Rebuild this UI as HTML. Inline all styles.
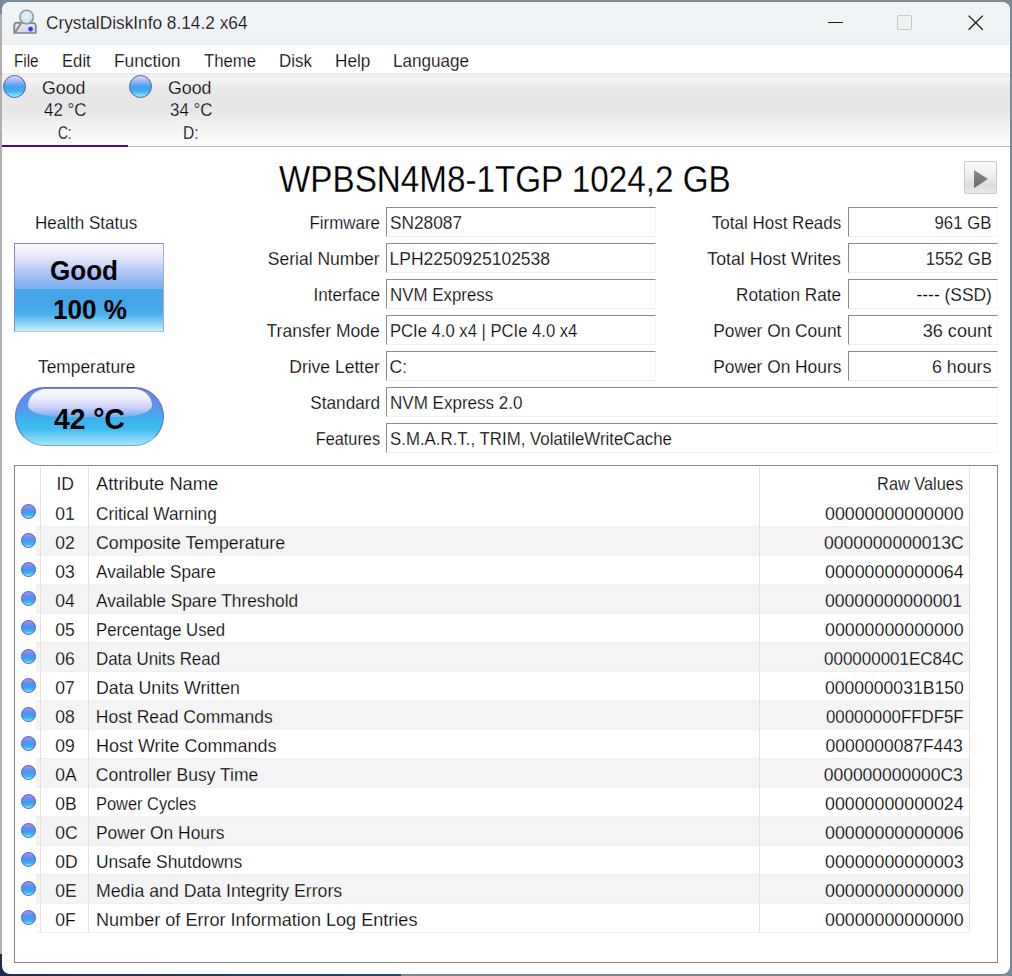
<!DOCTYPE html>
<html><head><meta charset="utf-8"><style>
html,body{margin:0;padding:0}
body{width:1012px;height:976px;overflow:hidden;position:relative;background:#7b8a97;font-family:"Liberation Sans",sans-serif}
#lstrip{position:absolute;left:0;top:14px;width:2px;height:940px;background:#aeaeae}
#bstrip{position:absolute;left:0;top:954px;width:401px;height:22px;background:linear-gradient(to right,#1e2a52,#2a3c6a 60%,#2e4470)}
#win{position:absolute;left:0;top:0;width:1012px;height:976px}
#frame{position:absolute;left:2px;top:2px;width:1008px;height:972px;border-radius:8px;background:#fff;overflow:hidden}
#titlebar{position:absolute;left:2px;top:2px;width:1008px;height:43px;background:linear-gradient(to bottom,#f1f4f5 0,#eff2f4 40px,#eceff1 43px);border-radius:8px 8px 0 0}
#menubar{position:absolute;left:2px;top:45px;width:1008px;height:28px;background:#fff}
#tabbar{position:absolute;left:2px;top:73px;width:1008px;height:73px;
 background:linear-gradient(to bottom,#ececec 0px,#ededed 1.5px,#f5f5f5 2px,#ececec 3px,#efefef 4px,#f6f6f6 5px,#eaeaea 14px,#e7e7e7 21px,#e7e7e7 37px,#efefef 49px,#f6f6f6 60px,#fbfbfb 70px,#fdfdfd 73px)}
#tabline{position:absolute;left:2px;top:146px;width:1008px;height:1px;background:#b9b9b9}
#tabsel{position:absolute;left:2px;top:145px;width:126px;height:2px;background:#3a0cb4}
.t{position:absolute;white-space:nowrap;line-height:1;color:#000;-webkit-text-stroke:0.3px rgba(255,255,255,.75)}
.b{-webkit-text-stroke:0}
.bigdot{position:absolute;top:75px;width:23px;height:23px;border-radius:50%;box-sizing:border-box;border:1px solid #48649f;
 background:linear-gradient(to bottom,#dcdcfc 0%,#9cb4f4 25%,#4aa2ee 50%,#3cb0ee 72%,#a4e6fc 100%)}

.dot{position:absolute;left:21px;width:15px;height:15px;border-radius:50%;box-sizing:border-box;border:1px solid #4a5cc0;
 background:linear-gradient(to bottom,#a890f4 0%,#6a8cf0 30%,#3a9aec 55%,#40b8f0 80%,#a0e4fa 100%)}

.box{position:absolute;height:28px;border-top:1px solid #8a8a8a;border-left:1px solid #8a8a8a;border-bottom:1px solid #f0f0f0;border-right:1px solid #f5f5f5;background:#fff}
#health{position:absolute;left:14px;top:243px;width:148px;height:87px;border:1px solid #8a88c4;border-bottom-color:#98d0ee;border-right-color:#9ab0e0;
 background:linear-gradient(to bottom,#f8f8fe 0px,#f0f0fd 8px,#d6ddfa 18px,#b0c6f6 28px,#8eb8f2 38px,#7caef0 45px,#46a4e8 45.5px,#44a6ea 62px,#4cb2ec 71px,#92d6f4 80px,#c6ecfa 87px)}

#temp{position:absolute;left:14.5px;top:387px;width:147px;height:57px;border-radius:30px;border:1px solid #6468c0;border-bottom-color:#70a8e0;overflow:hidden;
 background:linear-gradient(to bottom,#6a84ea 0%,#5a96ec 35%,#3cb2ec 55%,#40bcf0 72%,#a8e4fa 100%)}

#temp .hl{position:absolute;left:12px;top:1px;width:124px;height:28px;border-radius:22px 22px 40px 40px/20px 20px 14px 14px;
 background:linear-gradient(to bottom,#fcfcff 0%,#f0f0fe 30%,#ccd2f8 65%,rgba(150,180,242,.55) 100%)}

#icon{position:absolute;left:12px;top:8px}
#minbtn{position:absolute;left:828px;top:22px;width:15px;height:1px;background:#1e1e1e}
#maxbtn{position:absolute;left:897px;top:15px;width:13px;height:13px;border:1.3px solid #c6c8ca;border-radius:2px}
#closebtn{position:absolute;left:968px;top:15px}
#play{position:absolute;left:964px;top:161px;width:31px;height:31px;border:1px solid #c8c8c8;border-radius:2px;background:linear-gradient(to bottom,#fcfcfc 0%,#f0f0f0 40%,#dcdcdc 75%,#e8e8e8 100%)}
#play svg{position:absolute;left:8px;top:7px}
#tbl{position:absolute;left:14px;top:465px;width:982px;height:496px;border:1px solid #858585}
.shade{position:absolute;left:36px;width:933px;height:29px;background:#f4f4f4;box-shadow:inset 0 1px 0 #eeeeee}
.rline{position:absolute;left:36px;width:933px;height:1px;background:#efefef}
.vl{position:absolute;top:467px;width:1px;height:465px;background:#e3e3e3}

</style></head><body>
<div id="lstrip"></div><div id="bstrip"></div><div id="frame"></div>
<div id="win">
<div id="titlebar"></div>
<div id="menubar"></div>
<div id="tabbar"></div>
<div id="tabline"></div>
<div id="tabsel"></div>
<div class="bigdot" style="left:3px"></div>
<div class="bigdot" style="left:129px"></div>
<svg id="icon" width="26" height="26" viewBox="12 8 26 26"><defs><linearGradient id="dg" x1="0" y1="0" x2="0" y2="1"><stop offset="0" stop-color="#ececf6"/><stop offset="1" stop-color="#d6d6e4"/></linearGradient><radialGradient id="gg" cx="0.5" cy="0.45" r="0.6"><stop offset="0" stop-color="#e8f3fe"/><stop offset="1" stop-color="#c4dcf4"/></radialGradient><radialGradient id="lg"><stop offset="0" stop-color="#2828d8"/><stop offset="0.55" stop-color="#4848f0"/><stop offset="1" stop-color="#b0b0ff" stop-opacity="0"/></radialGradient></defs>
<path d="M14.2 33 L14.2 26 Q14.2 22.6 17.5 22.6 L33.5 23.2 Q35.8 23.4 35.8 26 L35.8 33 Z" fill="url(#dg)" stroke="#828288" stroke-width="1.7" stroke-linejoin="round"/>
<path d="M15.6 31.4 L21.6 22.6" stroke="#909096" stroke-width="2.2" stroke-linecap="round"/>
<circle cx="26.6" cy="17.1" r="6.8" fill="url(#gg)" stroke="#94989c" stroke-width="1.6"/>
<circle cx="30.6" cy="29.1" r="3.4" fill="url(#lg)"/>
</svg>
<div id="minbtn"></div><div id="maxbtn"></div>
<svg id="closebtn" width="16" height="16" viewBox="0 0 16 16"><path d="M0.6 0.6L14.8 14.8M14.8 0.6L0.6 14.8" stroke="#1a1a1a" stroke-width="1.3"/></svg>
<div id="health"></div>
<div id="temp"><div class="hl"></div></div>
<div id="play"><svg width="16" height="20" viewBox="0 0 16 20"><defs><linearGradient id="pg" x1="0" y1="0" x2="0" y2="1"><stop offset="0" stop-color="#8a8a8a"/><stop offset="1" stop-color="#6a6a6a"/></linearGradient></defs><path d="M1 1L15 10L1 19Z" fill="url(#pg)"/></svg></div>
<div class="t" style="left:45.80px;top:14.89px;font-size:17.5px;transform:scaleX(0.9864);transform-origin:left;">CrystalDiskInfo 8.14.2 x64</div>
<div class="t" style="left:13.80px;top:52.89px;font-size:17.5px;transform:scaleX(0.8718);transform-origin:left;">File</div>
<div class="t" style="left:62.10px;top:52.89px;font-size:17.5px;transform:scaleX(0.9521);transform-origin:left;">Edit</div>
<div class="t" style="left:113.80px;top:52.89px;font-size:17.5px;transform:scaleX(0.9894);transform-origin:left;">Function</div>
<div class="t" style="left:203.80px;top:52.89px;font-size:17.5px;transform:scaleX(0.9565);transform-origin:left;">Theme</div>
<div class="t" style="left:278.80px;top:52.89px;font-size:17.5px;transform:scaleX(0.9683);transform-origin:left;">Disk</div>
<div class="t" style="left:334.70px;top:52.89px;font-size:17.5px;transform:scaleX(0.9804);transform-origin:left;">Help</div>
<div class="t" style="left:393.40px;top:52.89px;font-size:17.5px;transform:scaleX(0.9759);transform-origin:left;">Language</div>
<div class="t" style="left:42.40px;top:79.89px;font-size:17.5px;transform:scaleX(1.0156);transform-origin:left;">Good</div>
<div class="t" style="left:43.50px;top:102.09px;font-size:17.5px;transform:scaleX(0.9643);transform-origin:left;">42 °C</div>
<div class="t" style="left:57.60px;top:124.89px;font-size:17.5px;transform:scaleX(0.7771);transform-origin:left;">C:</div>
<div class="t" style="left:168.40px;top:79.89px;font-size:17.5px;transform:scaleX(1.0156);transform-origin:left;">Good</div>
<div class="t" style="left:169.50px;top:102.09px;font-size:17.5px;transform:scaleX(0.9643);transform-origin:left;">34 °C</div>
<div class="t" style="left:183.10px;top:124.89px;font-size:17.5px;transform:scaleX(0.8857);transform-origin:left;">D:</div>
<div class="t" style="left:278.80px;top:162.30px;font-size:36.5px;transform:scaleX(0.9099);transform-origin:left;">WPBSN4M8-1TGP 1024,2 GB</div>
<div class="t" style="left:34.70px;top:215.19px;font-size:17.5px;transform:scaleX(0.9739);transform-origin:left;">Health Status</div>
<div class="t b" style="left:50.40px;top:258.34px;font-size:27px;font-weight:bold;transform:scaleX(0.9649);transform-origin:left;">Good</div>
<div class="t b" style="left:52.90px;top:297.34px;font-size:27px;font-weight:bold;transform:scaleX(0.9654);transform-origin:left;">100 %</div>
<div class="t" style="left:37.80px;top:359.09px;font-size:17.5px;transform:scaleX(0.9922);transform-origin:left;">Temperature</div>
<div class="t b" style="left:53.50px;top:404.43px;font-size:29.5px;font-weight:bold;transform:scaleX(0.9579);transform-origin:left;">42 °C</div>
<div class="box" style="left:386px;top:207px;width:268px"></div>
<div class="t" style="left:306.77px;top:215.19px;font-size:17.5px;transform:scaleX(0.9653);transform-origin:right;">Firmware</div>
<div class="t" style="left:389.50px;top:215.19px;font-size:17.5px;transform:scaleX(0.9866);transform-origin:left;">SN28087</div>
<div class="box" style="left:386px;top:243px;width:268px"></div>
<div class="t" style="left:267.83px;top:251.19px;font-size:17.5px;">Serial Number</div>
<div class="t" style="left:389.50px;top:251.19px;font-size:17.5px;">LPH2250925102538</div>
<div class="box" style="left:386px;top:279px;width:268px"></div>
<div class="t" style="left:311.58px;top:287.19px;font-size:17.5px;transform:scaleX(0.9792);transform-origin:right;">Interface</div>
<div class="t" style="left:389.50px;top:287.19px;font-size:17.5px;transform:scaleX(0.9648);transform-origin:left;">NVM Express</div>
<div class="box" style="left:386px;top:315px;width:268px"></div>
<div class="t" style="left:266.56px;top:323.19px;font-size:17.5px;">Transfer Mode</div>
<div class="t" style="left:389.50px;top:323.19px;font-size:17.5px;transform:scaleX(0.9501);transform-origin:left;">PCIe 4.0 x4 | PCIe 4.0 x4</div>
<div class="box" style="left:386px;top:351px;width:268px"></div>
<div class="t" style="left:289.27px;top:359.19px;font-size:17.5px;">Drive Letter</div>
<div class="t" style="left:389.50px;top:359.19px;font-size:17.5px;">C:</div>
<div class="box" style="left:386px;top:387px;width:610px"></div>
<div class="t" style="left:308.69px;top:395.19px;font-size:17.5px;transform:scaleX(0.9816);transform-origin:right;">Standard</div>
<div class="t" style="left:389.50px;top:395.19px;font-size:17.5px;transform:scaleX(0.9732);transform-origin:left;">NVM Express 2.0</div>
<div class="box" style="left:386px;top:423px;width:610px"></div>
<div class="t" style="left:310.62px;top:431.19px;font-size:17.5px;transform:scaleX(0.9308);transform-origin:right;">Features</div>
<div class="t" style="left:389.50px;top:431.19px;font-size:17.5px;transform:scaleX(0.9622);transform-origin:left;">S.M.A.R.T., TRIM, VolatileWriteCache</div>
<div class="box" style="left:848px;top:207px;width:148px"></div>
<div class="t" style="left:707.84px;top:215.19px;font-size:17.5px;transform:scaleX(0.9718);transform-origin:right;">Total Host Reads</div>
<div class="t" style="left:932.47px;top:215.19px;font-size:17.5px;transform:scaleX(0.9574);transform-origin:right;">961 GB</div>
<div class="box" style="left:848px;top:243px;width:148px"></div>
<div class="t" style="left:709.15px;top:251.19px;font-size:17.5px;transform:scaleX(1.0125);transform-origin:right;">Total Host Writes</div>
<div class="t" style="left:922.72px;top:251.19px;font-size:17.5px;transform:scaleX(0.9612);transform-origin:right;">1552 GB</div>
<div class="box" style="left:848px;top:279px;width:148px"></div>
<div class="t" style="left:734.09px;top:287.19px;font-size:17.5px;transform:scaleX(0.9812);transform-origin:right;">Rotation Rate</div>
<div class="t" style="left:915.98px;top:287.19px;font-size:17.5px;transform:scaleX(0.9932);transform-origin:right;">---- (SSD)</div>
<div class="box" style="left:848px;top:315px;width:148px"></div>
<div class="t" style="left:711.73px;top:323.19px;font-size:17.5px;transform:scaleX(0.9910);transform-origin:right;">Power On Count</div>
<div class="t" style="left:924.64px;top:323.19px;font-size:17.5px;transform:scaleX(1.0349);transform-origin:right;">36 count</div>
<div class="box" style="left:848px;top:351px;width:148px"></div>
<div class="t" style="left:711.73px;top:359.19px;font-size:17.5px;transform:scaleX(0.9910);transform-origin:right;">Power On Hours</div>
<div class="t" style="left:933.44px;top:359.19px;font-size:17.5px;transform:scaleX(1.0178);transform-origin:right;">6 hours</div>
<div id="tbl"></div>
<div class="shade" style="top:526px"></div>
<div class="rline" style="top:555px"></div>
<div class="shade" style="top:584px"></div>
<div class="rline" style="top:613px"></div>
<div class="shade" style="top:642px"></div>
<div class="rline" style="top:671px"></div>
<div class="shade" style="top:700px"></div>
<div class="rline" style="top:729px"></div>
<div class="shade" style="top:758px"></div>
<div class="rline" style="top:787px"></div>
<div class="shade" style="top:816px"></div>
<div class="rline" style="top:845px"></div>
<div class="shade" style="top:874px"></div>
<div class="rline" style="top:903px"></div>
<div class="rline" style="top:932px"></div>
<div class="vl" style="left:40px"></div>
<div class="vl" style="left:88px"></div>
<div class="vl" style="left:759px"></div>
<div class="vl" style="left:969px"></div>
<div class="t" style="left:56.50px;top:476.09px;font-size:17.5px;">ID</div>
<div class="t" style="left:95.50px;top:476.09px;font-size:17.5px;transform:scaleX(1.0478);transform-origin:left;">Attribute Name</div>
<div class="t" style="left:870.91px;top:476.09px;font-size:17.5px;transform:scaleX(0.9338);transform-origin:right;">Raw Values</div>
<div class="dot" style="top:504.3px"></div>
<div class="t" style="left:55.30px;top:505.59px;font-size:17.5px;">01</div>
<div class="t" style="left:95.80px;top:505.59px;font-size:17.5px;transform:scaleX(0.9825);transform-origin:left;">Critical Warning</div>
<div class="t" style="left:824.50px;top:505.59px;font-size:17.5px;transform:scaleX(1.0177);transform-origin:left;">00000000000000</div>
<div class="dot" style="top:533.3px"></div>
<div class="t" style="left:55.30px;top:534.59px;font-size:17.5px;">02</div>
<div class="t" style="left:95.80px;top:534.59px;font-size:17.5px;transform:scaleX(1.0144);transform-origin:left;">Composite Temperature</div>
<div class="t" style="left:823.50px;top:534.59px;font-size:17.5px;transform:scaleX(1.0038);transform-origin:left;">0000000000013C</div>
<div class="dot" style="top:562.3px"></div>
<div class="t" style="left:55.30px;top:563.59px;font-size:17.5px;">03</div>
<div class="t" style="left:95.80px;top:563.59px;font-size:17.5px;transform:scaleX(0.9805);transform-origin:left;">Available Spare</div>
<div class="t" style="left:824.50px;top:563.59px;font-size:17.5px;transform:scaleX(1.0177);transform-origin:left;">00000000000064</div>
<div class="dot" style="top:591.3px"></div>
<div class="t" style="left:55.30px;top:592.59px;font-size:17.5px;">04</div>
<div class="t" style="left:95.80px;top:592.59px;font-size:17.5px;transform:scaleX(0.9877);transform-origin:left;">Available Spare Threshold</div>
<div class="t" style="left:824.50px;top:592.59px;font-size:17.5px;transform:scaleX(1.0060);transform-origin:left;">00000000000001</div>
<div class="dot" style="top:620.3px"></div>
<div class="t" style="left:55.30px;top:621.59px;font-size:17.5px;">05</div>
<div class="t" style="left:95.80px;top:621.59px;font-size:17.5px;transform:scaleX(0.9547);transform-origin:left;">Percentage Used</div>
<div class="t" style="left:824.50px;top:621.59px;font-size:17.5px;transform:scaleX(1.0177);transform-origin:left;">00000000000000</div>
<div class="dot" style="top:649.3px"></div>
<div class="t" style="left:55.30px;top:650.59px;font-size:17.5px;">06</div>
<div class="t" style="left:95.80px;top:650.59px;font-size:17.5px;transform:scaleX(0.9665);transform-origin:left;">Data Units Read</div>
<div class="t" style="left:823.50px;top:650.59px;font-size:17.5px;transform:scaleX(0.9700);transform-origin:left;">000000001EC84C</div>
<div class="dot" style="top:678.3px"></div>
<div class="t" style="left:55.30px;top:679.59px;font-size:17.5px;">07</div>
<div class="t" style="left:95.80px;top:679.59px;font-size:17.5px;transform:scaleX(1.0158);transform-origin:left;">Data Units Written</div>
<div class="t" style="left:824.50px;top:679.59px;font-size:17.5px;transform:scaleX(1.0036);transform-origin:left;">0000000031B150</div>
<div class="dot" style="top:707.3px"></div>
<div class="t" style="left:55.30px;top:708.59px;font-size:17.5px;">08</div>
<div class="t" style="left:95.80px;top:708.59px;font-size:17.5px;">Host Read Commands</div>
<div class="t" style="left:825.60px;top:708.59px;font-size:17.5px;transform:scaleX(0.9624);transform-origin:left;">00000000FFDF5F</div>
<div class="dot" style="top:736.3px"></div>
<div class="t" style="left:55.30px;top:737.59px;font-size:17.5px;">09</div>
<div class="t" style="left:95.80px;top:737.59px;font-size:17.5px;transform:scaleX(1.0268);transform-origin:left;">Host Write Commands</div>
<div class="t" style="left:825.60px;top:737.59px;font-size:17.5px;">0000000087F443</div>
<div class="dot" style="top:765.3px"></div>
<div class="t" style="left:55.30px;top:766.59px;font-size:17.5px;">0A</div>
<div class="t" style="left:95.80px;top:766.59px;font-size:17.5px;">Controller Busy Time</div>
<div class="t" style="left:823.70px;top:766.59px;font-size:17.5px;">000000000000C3</div>
<div class="dot" style="top:794.3px"></div>
<div class="t" style="left:55.30px;top:795.59px;font-size:17.5px;">0B</div>
<div class="t" style="left:95.80px;top:795.59px;font-size:17.5px;transform:scaleX(0.9377);transform-origin:left;">Power Cycles</div>
<div class="t" style="left:824.50px;top:795.59px;font-size:17.5px;transform:scaleX(1.0177);transform-origin:left;">00000000000024</div>
<div class="dot" style="top:823.3px"></div>
<div class="t" style="left:55.30px;top:824.59px;font-size:17.5px;">0C</div>
<div class="t" style="left:95.80px;top:824.59px;font-size:17.5px;transform:scaleX(0.9933);transform-origin:left;">Power On Hours</div>
<div class="t" style="left:824.50px;top:824.59px;font-size:17.5px;transform:scaleX(1.0177);transform-origin:left;">00000000000006</div>
<div class="dot" style="top:852.3px"></div>
<div class="t" style="left:55.30px;top:853.59px;font-size:17.5px;">0D</div>
<div class="t" style="left:95.80px;top:853.59px;font-size:17.5px;transform:scaleX(0.9958);transform-origin:left;">Unsafe Shutdowns</div>
<div class="t" style="left:824.50px;top:853.59px;font-size:17.5px;transform:scaleX(1.0177);transform-origin:left;">00000000000003</div>
<div class="dot" style="top:881.3px"></div>
<div class="t" style="left:55.30px;top:882.59px;font-size:17.5px;">0E</div>
<div class="t" style="left:95.80px;top:882.59px;font-size:17.5px;transform:scaleX(1.0125);transform-origin:left;">Media and Data Integrity Errors</div>
<div class="t" style="left:824.50px;top:882.59px;font-size:17.5px;transform:scaleX(1.0177);transform-origin:left;">00000000000000</div>
<div class="dot" style="top:910.3px"></div>
<div class="t" style="left:55.30px;top:911.59px;font-size:17.5px;">0F</div>
<div class="t" style="left:95.80px;top:911.59px;font-size:17.5px;transform:scaleX(1.0327);transform-origin:left;">Number of Error Information Log Entries</div>
<div class="t" style="left:824.50px;top:911.59px;font-size:17.5px;transform:scaleX(1.0177);transform-origin:left;">00000000000000</div>
</div>
</body></html>
